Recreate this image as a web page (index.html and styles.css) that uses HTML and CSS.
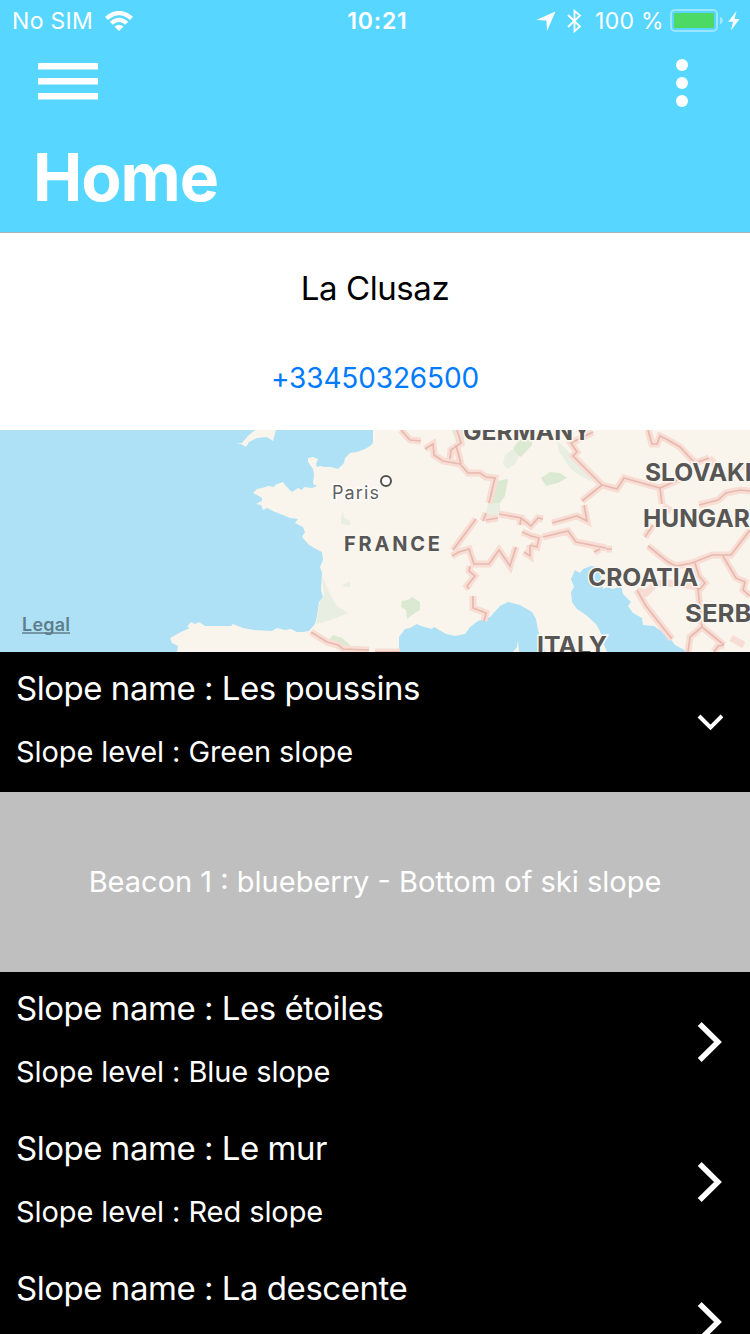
FILE: index.html
```html
<!DOCTYPE html>
<html lang="en">
<head>
<meta charset="utf-8">
<title>Home</title>
<link rel="stylesheet" href="styles.css">
</head>
<body>
<main class="screen">
  <header class="header">
    <div class="status">
      <div class="status-left">
        <span class="carrier">No SIM</span>
        <svg class="wifi" width="28" height="20" viewBox="0 0 28 20" fill="#fff"><path d="M0 5.800Q14-6 28 5.800L25 9Q14-.5 3 9ZM4.800 10.700Q14 3 23.200 10.700L20.300 13.700Q14 8.500 7.700 13.700ZM9.500 15.500Q14 12 18.500 15.500L14 20Z"/></svg>
      </div>
      <span class="clock">10:21</span>
      <div class="status-right">
        <svg class="locate" width="20" height="20" viewBox="0 0 20 20" fill="#fff"><path d="M19.500.5L11 20 10.500 9.500.200 9Z"/></svg>
        <svg class="bluetooth" width="15" height="24" viewBox="0 0 15 24" fill="none" stroke="#fff" stroke-width="1.800"><path d="M1 6L13 17.500 7.500 22.200V1.800L13 6.500 1 18"/></svg>
        <span class="percent">100 %</span>
        <svg class="battery" width="54" height="24" viewBox="0 0 54 24"><rect x="1" y="1" width="46" height="21" rx="4" fill="none" stroke="#fff" stroke-opacity=".4" stroke-width="2"/><rect x="4" y="4" width="40" height="15" rx="1.500" fill="#4cd964"/><path d="M50 7.500Q56 11.500 50 15.500Z" fill="#fff" opacity=".45"/></svg>
        <svg class="bolt" width="12" height="20" viewBox="0 0 12 20" fill="#fff"><path d="M8.500 0L.2 10.800H5L3 19.500 11.500 8H6.500Z"/></svg>
      </div>
    </div>
    <div class="toolbar">
      <svg class="menu" width="60" height="37" viewBox="0 0 60 37" fill="#fff"><path d="M0 0H60V6.500H0ZM0 15H60V21.500H0ZM0 30H60V36.500H0Z"/></svg>
      <svg width="12" height="48" viewBox="0 0 12 48" fill="#fff"><circle cx="6" cy="6" r="6"/><circle cx="6" cy="24" r="6"/><circle cx="6" cy="42" r="6"/></svg>
    </div>
    <h1 class="title">Home</h1>
  </header>
  <section class="resort">
    <div class="resort-name">La Clusaz</div>
    <a class="phone">+33450326500</a>
  </section>
  <svg class="map" width="750" height="222" viewBox="0 430 750 222">
    <rect x="0" y="430" width="750" height="222" fill="#aee1f6"/>
    <g fill="#f9f5ec">
      <path d="M373 430L373 443 370 446 365 449 357 452 350 453 345 458 344 463 338 469 331 467 325 467 320 466 317 467 316 464 318 459 313 457 308 458 308 462 313 469 314 474 313 484 317 486 312 488 304 487 302 490 298 488 292 492 285 485 283 482 275 485 274 487 268 486 262 488 257 489 253 493 257 495 262 498 262 501 256 504 261 505 263 510 267 508 275 512 283 515 290 518 298 519 295 523 303 527 305 532 302 537 309 545 316 549 322 552 323 560 320 567 322 573 321 590 323 597 319 602 317 616 315 624 309 631 303 632 297 632 291 629 285 630 277 628 272 631 254 630 243 628 233 624 231 626 205 626 199 622 195 624 191 622 187 627 190 628 181 632 170 638 172 643 178 646 177 652H399V637L405 629 410 628 417 624 421 626 432 629 434 627 446 634 455 636 465 634 470 627 478 621 490 617 500 606 508 602 520 605 532 612 536 619 538 630 545 652H607L603 642 600 631 596 624 586 615 577 609 572 602 571 592 574 587 571 579 575 570 580 573 583 569 591 566 598 567 601 575 603 589 607 587 613 589 621 586 623 594 631 602 628 606 633 613 642 618 643 625 654 626 664 633 670 638 675 645 688 652H750V430Z"/>
      <path d="M236 444L242 443 248 436 255 430H276L273 441 267 437 257 438 249 442 246 447 241 444Z"/>
      <path d="M513 652L517 647 518 640 519 652Z"/>
    </g>
    <g class="forest">
      <path d="M402 601L408 600 412 597 420 602 420 610 415 613 407 619 406 610 401 607Z"/>
      <path d="M497 481L508 479 505 496 499 504 490 516 486 513 492 492Z"/>
      <path d="M514 447L520 439 532 437 532 445 521 457 512 453Z"/>
      <path d="M541 478L550 472 560 473 567 478 558 483 546 486Z"/>
      <path d="M327 642L333 635 342 638 350 645 350 652 335 648ZM452 430H465L464 441 457 444Z"/>
    </g>
    <g class="forest pale">
      <path d="M322 576L329 592 336 605 348 613 331 620 316 624 320 601 324 596Z"/>
      <path d="M341 519L343 511 344 518 350 521V525L341 524ZM341 586L350 581V587L341 586Z"/>
      <path d="M505 455L513 449 519 456 515 464 507 469 503 464ZM557 441L568 451 574 459 587 470 592 482 579 475 570 468 559 451ZM488 503L500 503 500 514 486 518Z"/>
    </g>
    <defs>
      <g id="borders">
        <path d="M401 430L410 440 421 441M425 449L433 444 434 455 443 461 460 464 468 473 480 473 486 477 495 478 489 503M457 430L461 443 451 450 450 459M456 445L461 464M486 513L483 521M486 520L498 518M499 514L521 518 520 525M521 518L531 526 538 518 543 519"/>
        <path d="M476 519L453 550M452 556L459 552 469 549 474 564 489 564 499 550 510 566 516 547M522 532L531 536 539 538 537 547 530 545M530 545L530 556 524 552M470 566L469 571 475 576 467 586 469 589M473 596L473 608 486 613 484 621"/>
        <path d="M552 523L577 516 587 521 584 505M582 501L602 485 617 489 624 478 660 488 680 479M602 485L573 456 577 452 571 443 593 432M543 537L568 531 576 542 606 548M648 430L652 444 657 444 660 436 668 440 680 447 695 463 709 458M660 488L662 504M699 505L718 500 726 493 740 490 750 491"/>
        <path d="M653 525L645 537M648 546L658 554 668 562 676 566 692 563 712 555 731 555 750 530M723 556L736 578 745 582 743 590 750 596M695 563L699 576 705 583 700 589 692 586M637 590L646 606 672 639M698 589L702 627 724 645M702 627L690 637 688 652M311 632L327 642 338 645 343 649 369 650M375 652H400M714 652L718 646 724 645M594 552L600 549M606 549H612"/>
      </g>
    </defs>
    <path class="border-wide" d="M663 506L671 511M692 586L672 583 655 584 646 593 637 590M709 458L720 469M733 469L750 464M731 638L744 645"/>
    <use href="#borders" class="border-wide"/>
    <use href="#borders" class="border-line"/>
    <g class="countries">
      <text x="463" y="439.500" textLength="128" lengthAdjust="spacingAndGlyphs">GERMANY</text>
      <text x="645" y="481" textLength="125" lengthAdjust="spacingAndGlyphs">SLOVAKIA</text>
      <text x="643" y="527" textLength="124" lengthAdjust="spacingAndGlyphs">HUNGARY</text>
      <text x="588" y="586" textLength="110" lengthAdjust="spacingAndGlyphs">CROATIA</text>
      <text x="685" y="621.500" textLength="93" lengthAdjust="spacingAndGlyphs">SERBIA</text>
      <text x="537" y="654" textLength="70" lengthAdjust="spacingAndGlyphs">ITALY</text>
      <text class="france" x="344" y="550.500" textLength="96">FRANCE</text>
    </g>
    <text class="city" x="332" y="499" textLength="47">Paris</text>
    <circle cx="386" cy="481" r="5" fill="#fff" stroke="#55524e" stroke-width="2"/>
    <text class="legal" x="22" y="631" textLength="48">Legal</text>
    <path d="M22 633H70" stroke="#5f7e8b" stroke-width="1.600"/>
  </svg>
  <section class="slopes">
    <article class="slope">
      <div><div class="name">Slope name : Les poussins</div><div class="level">Slope level : Green slope</div></div>
      <svg class="chevron" width="26" height="42" viewBox="0 0 26 42"><path d="M2 15L13.500 26.500 25 15" stroke-width="4"/></svg>
    </article>
    <div class="beacon">Beacon 1 : blueberry - Bottom of ski slope</div>
    <article class="slope">
      <div><div class="name">Slope name : Les étoiles</div><div class="level">Slope level : Blue slope</div></div>
      <svg class="chevron" width="26" height="42" viewBox="0 0 26 42"><path d="M2.700 3L21 21 2.700 39" stroke-width="5.500"/></svg>
    </article>
    <article class="slope">
      <div><div class="name">Slope name : Le mur</div><div class="level">Slope level : Red slope</div></div>
      <svg class="chevron" width="26" height="42" viewBox="0 0 26 42"><path d="M2.700 3L21 21 2.700 39" stroke-width="5.500"/></svg>
    </article>
    <article class="slope">
      <div><div class="name">Slope name : La descente</div></div>
      <svg class="chevron" width="26" height="42" viewBox="0 0 26 42"><path d="M2.700 3L21 21 2.700 39" stroke-width="5.500"/></svg>
    </article>
  </section>
</main>
</body>
</html>
```
FILE: styles.css
```css
* { box-sizing: border-box; }
body { margin: 0; font-family: Inter, "Liberation Sans", sans-serif; }
svg { display: block; flex: none; }
.screen { width: 750px; height: 1334px; overflow: hidden; background: #000; white-space: nowrap; }
.header { height: 233px; background: #57d6ff; border-bottom: 1px solid #a9b4b8; color: #fff; }
.status { display: grid; grid-template-columns: 1fr auto 1fr; align-items: center; height: 40px; padding: 0 10px 0 12px; font-size: 23px; line-height: 40px; }
.status-left, .status-right { display: flex; align-items: center; }
.status-left { gap: 12px; }
.status-right { justify-content: flex-end; }
.carrier { letter-spacing: .3px; padding-top: 1px; }
.clock { font-weight: 600; letter-spacing: .8px; padding: 1px 0 0 3px; }
.locate { margin-right: 11px; }
.bluetooth { margin-right: 13px; }
.percent { letter-spacing: .3px; margin-right: 6px; padding-top: 1px; }
.battery { margin-right: 4px; }
.toolbar { display: flex; justify-content: space-between; align-items: center; height: 86px; padding: 0 62px 0 38px; }
.menu { margin-bottom: 3px; }
.title { margin: 0; padding: 11px 0 0 33px; font-size: 66px; line-height: 80px; font-weight: 700; letter-spacing: -1.100px; }
.resort { height: 197px; background: #fff; display: flex; flex-direction: column; align-items: center; padding-top: 34px; }
.resort-name { font-size: 33px; line-height: 42px; letter-spacing: -.4px; }
.phone { margin-top: 49px; font-size: 28px; line-height: 40px; letter-spacing: -.15px; color: #007aff; }
.forest { fill: #dce9d2; }
.pale { fill: #e8eee1; }
.border-wide { fill: none; stroke: #f8ddd4; stroke-width: 7; }
.border-line { fill: none; stroke: #e8b9af; stroke-width: 1.7; }
.countries { font-size: 24.5px; font-weight: 700; fill: #575655; stroke: #faf7f1; stroke-width: 3px; paint-order: stroke; }
.france { font-size: 20px; }
.city { font-size: 18px; fill: #62605d; stroke: #fff; stroke-width: 3px; paint-order: stroke; }
.legal { font-size: 18px; font-weight: 600; fill: #5f7e8b; }
.slope { display: flex; justify-content: space-between; height: 140px; padding: 15px 27px 0 16px; color: #fff; }
.name { font-size: 33px; line-height: 42px; letter-spacing: -.47px; }
.level { margin-top: 23px; font-size: 29px; line-height: 40px; letter-spacing: -.08px; }
.chevron { margin-top: 34px; fill: none; stroke: #fff; }
.beacon { display: flex; align-items: center; justify-content: center; height: 180px; padding-bottom: 2px; background: #bfbfbf; color: #fff; font-size: 29px; }
```
